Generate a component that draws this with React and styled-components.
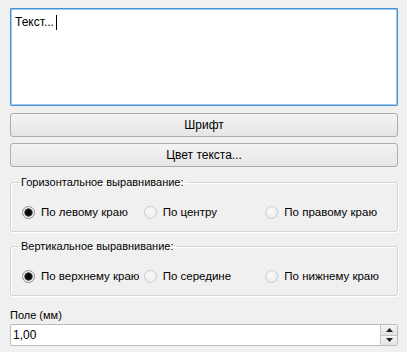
import React from 'react'
import styled, { createGlobalStyle } from 'styled-components'

const GlobalStyle = createGlobalStyle`
  html, body {
    margin: 0;
    padding: 0;
    background: #f0f0f0;
  }
  body {
    font-family: "Liberation Sans", Arial, sans-serif;
    font-size: 11px;
    color: #000;
  }
`

const Panel = styled.div`
  width: 388px;
  padding: 8px 9px 0 10px;
  display: flex;
  flex-direction: column;
`

const TextBox = styled.div`
  box-sizing: border-box;
  height: 98px;
  background: #fff;
  border: 1px solid #4a8fcf;
  box-shadow: inset 0 0 0 1px #9ccaf2;
  border-radius: 1px;
  padding: 6px 4px;
  font-size: 12px;
  line-height: 14px;
`

const Caret = styled.span`
  display: inline-block;
  width: 1px;
  height: 15px;
  background: #000;
  vertical-align: top;
  margin-left: 2px;
`

const Button = styled.button`
  box-sizing: border-box;
  height: 24px;
  margin-top: ${p => p.$gap}px;
  border: 1px solid #acacac;
  border-radius: 3px;
  background: linear-gradient(#f3f3f3, #e6e6e6);
  font-family: inherit;
  font-size: 12px;
  color: #000;
  padding: 0;
`

const Group = styled.fieldset`
  margin: ${p => p.$top}px 0 0;
  padding: 15px 10px 11px 11px;
  border: 1px solid #d5d5d5;
  border-radius: 3px;
  box-shadow: inset 1px 1px 0 #fff, 1px 1px 0 #fff;
  display: grid;
  grid-template-columns: 1fr 1fr 1fr;
  min-width: 0;
`

const Title = styled.legend`
  padding: 0 3px 0 1px;
  margin-left: -2px;
  line-height: 14px;
`

const Option = styled.label`
  display: flex;
  align-items: center;
  gap: 6px;
  height: 16px;
  font-size: 11.5px;
  white-space: nowrap;
`

const Dot = styled.span`
  box-sizing: border-box;
  width: 13px;
  height: 13px;
  border-radius: 50%;
  border: 1px solid ${p => (p.$on ? '#8e8f8f' : '#cccccc')};
  background: ${p =>
    p.$on
      ? 'radial-gradient(circle, #000 0, #111 3px, #4a4a4a 3.8px, #f4f4f4 4.6px, #e6e6e6 100%)'
      : 'radial-gradient(circle at 50% 35%, #fbfbfb, #e8e8e8)'};
  flex-shrink: 0;
`

const Caption = styled.div`
  margin-top: 12px;
  line-height: 14px;
`

const Spin = styled.div`
  box-sizing: border-box;
  margin-top: 2px;
  height: 22px;
  display: flex;
  background: #fff;
  border: 1px solid #bcbcbc;
  border-radius: 2px;
`

const SpinValue = styled.div`
  flex: 1;
  display: flex;
  align-items: center;
  padding-left: 2px;
  font-size: 12px;
`

const Arrows = styled.div`
  width: 16px;
  display: flex;
  flex-direction: column;
  border-left: 1px solid #c4c4c4;
  background: #f0f0f0;
`

const Arrow = styled.div`
  flex: 1;
  display: flex;
  align-items: center;
  justify-content: center;
  background: linear-gradient(#f5f5f5, #e3e3e3);
  & + & {
    border-top: 1px solid #c4c4c4;
  }
`

const Tri = ({ up }) => (
  <svg width="7" height="4" viewBox="0 0 7 4">
    <path d={up ? 'M0 4 L3.5 0 L7 4 Z' : 'M0 0 L3.5 4 L7 0 Z'} fill="#222" />
  </svg>
)

const groups = [
  {
    title: 'Горизонтальное выравнивание:',
    items: ['По левому краю', 'По центру', 'По правому краю'],
    top: 8,
  },
  {
    title: 'Вертикальное выравнивание:',
    items: ['По верхнему краю', 'По середине', 'По нижнему краю'],
    top: 7,
  },
]

export default function App() {
  return (
    <>
      <GlobalStyle />
      <Panel>
        <TextBox>
          Текст...<Caret />
        </TextBox>
        <Button $gap={7}>Шрифт</Button>
        <Button $gap={6}>Цвет текста...</Button>
        {groups.map(g => (
          <Group key={g.title} $top={g.top}>
            <Title>{g.title}</Title>
            {g.items.map((t, i) => (
              <Option key={t}>
                <Dot $on={i === 0} />
                {t}
              </Option>
            ))}
          </Group>
        ))}
        <Caption>Поле (мм)</Caption>
        <Spin>
          <SpinValue>1,00</SpinValue>
          <Arrows>
            <Arrow><Tri up /></Arrow>
            <Arrow><Tri /></Arrow>
          </Arrows>
        </Spin>
      </Panel>
    </>
  )
}
